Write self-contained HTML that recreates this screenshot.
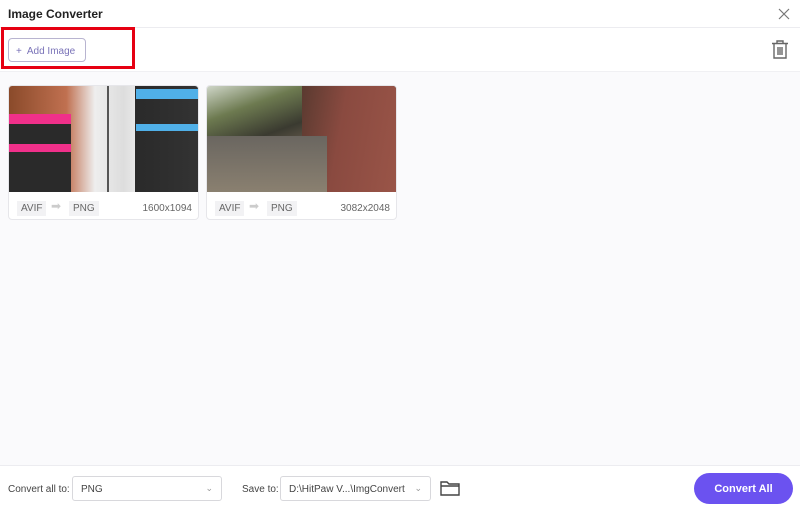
<!DOCTYPE html>
<html><head><style>
*{margin:0;padding:0;box-sizing:border-box}
body{width:800px;height:509px;background:#fafafc;font-family:"Liberation Sans",sans-serif;position:relative;overflow:hidden;color:#333}
.title{position:absolute;left:0;top:0;width:800px;height:28px;background:#fff;border-bottom:1px solid #ececf0}
.title b{position:absolute;left:8px;top:7px;font-size:12px;color:#222}
.tool{position:absolute;left:0;top:28px;width:800px;height:44px;background:#fff;border-bottom:1px solid #f0f0f3}
.red{position:absolute;left:1px;top:27px;width:134px;height:42px;border:3px solid #e60012}
.add{position:absolute;left:8px;top:38px;width:78px;height:24px;border:1px solid #b8b4d0;border-radius:4px;font-size:10px;color:#7a73b8;padding:7px 0 0 7px}
.card{position:absolute;top:85px;width:191px;height:135px;background:#fff;border:1px solid #e6e6ea;border-radius:4px;overflow:hidden}
.img{position:absolute;left:0;top:0;width:191px;height:106px}
.row{position:absolute;top:106px;left:0;width:191px;height:28px;font-size:10px;color:#666}
.row span{position:absolute;top:9px}
.tag{background:#f2f2f4;padding:2px 4px}
.foot{position:absolute;left:0;top:465px;width:800px;height:44px;background:#fff;border-top:1px solid #ececf0;font-size:10px;color:#444}
.sel{position:absolute;top:10px;height:25px;border:1px solid #d8d8dc;border-radius:3px;padding:7px 0 0 8px;background:#fff}
.sel i{position:absolute;right:8px;top:6px;font-style:normal;color:#999;font-size:9px}
.btn{position:absolute;left:694px;top:7px;width:99px;height:31px;border-radius:16px;background:#6b52f0;color:#fff;font-weight:bold;font-size:11px;display:flex;align-items:center;justify-content:center}
</style></head><body>
<div class="title"><b>Image Converter</b>
<svg style="position:absolute;left:778px;top:8px" width="12" height="12"><path d="M1 1L11 11M11 1L1 11" stroke="#777" stroke-width="1.2"/></svg></div>
<div class="tool">
<svg style="position:absolute;left:771px;top:12px" width="18" height="20"><path d="M6 3V1h6v2M1 3.5h16M3 4v14h12V4M7 7v8M9 7v8M11 7v8" stroke="#666" stroke-width="1.4" fill="none"/></svg></div>
<div class="add">+&nbsp; Add Image</div>
<div class="red"></div>
<div class="card" style="left:8px">
<div class="img" style="background:linear-gradient(90deg,#8a4a2a 0,#c07050 30%,#eee 45%,#ddd 60%,#e8e8e8 66%,#2a2a2a 66%,#333 100%)">
<div style="position:absolute;left:0;top:28px;width:62px;height:78px;background:#2a2a2a"></div>
<div style="position:absolute;left:0;top:28px;width:62px;height:10px;background:#f0308a"></div>
<div style="position:absolute;left:0;top:58px;width:62px;height:8px;background:#f0308a"></div>
<div style="position:absolute;left:127px;top:3px;width:64px;height:10px;background:#50b0e8"></div>
<div style="position:absolute;left:127px;top:38px;width:64px;height:7px;background:#50b0e8"></div>
<div style="position:absolute;left:98px;top:0;width:2px;height:106px;background:#555"></div>
</div>
<div class="row"><span class="tag" style="left:8px">AVIF</span><span style="left:42px;top:7px;color:#ccc;font-size:12px">➡</span><span class="tag" style="left:60px">PNG</span><span style="right:8px;top:11px">1600x1094</span></div></div>
<div class="card" style="left:206px">
<div class="img" style="background:linear-gradient(160deg,#cfd6c8 0,#6d7a50 20%,#3a3a30 40%,#7a6a5a 60%,#5a5048 100%)">
<div style="position:absolute;left:95px;top:0;width:96px;height:106px;background:linear-gradient(100deg,#5a3a30,#8a4a40 40%,#9a5548)"></div>
<div style="position:absolute;left:0;top:50px;width:120px;height:56px;background:linear-gradient(180deg,#6a6660,#8a8070)"></div>
</div>
<div class="row"><span class="tag" style="left:8px">AVIF</span><span style="left:42px;top:7px;color:#ccc;font-size:12px">➡</span><span class="tag" style="left:60px">PNG</span><span style="right:8px;top:11px">3082x2048</span></div></div>
<div class="foot">
<span style="position:absolute;left:8px;top:18px">Convert all to:</span>
<div class="sel" style="left:72px;width:150px">PNG<i>⌄</i></div>
<span style="position:absolute;left:242px;top:18px">Save to:</span>
<div class="sel" style="left:280px;width:151px">D:\HitPaw V...\ImgConvert<i>⌄</i></div>
<svg style="position:absolute;left:440px;top:14px" width="20" height="16"><path d="M1 2h6l2 2h10v11H1z M1 6h18" stroke="#444" stroke-width="1.4" fill="none"/></svg>
<div class="btn">Convert All</div></div>
</body></html>
